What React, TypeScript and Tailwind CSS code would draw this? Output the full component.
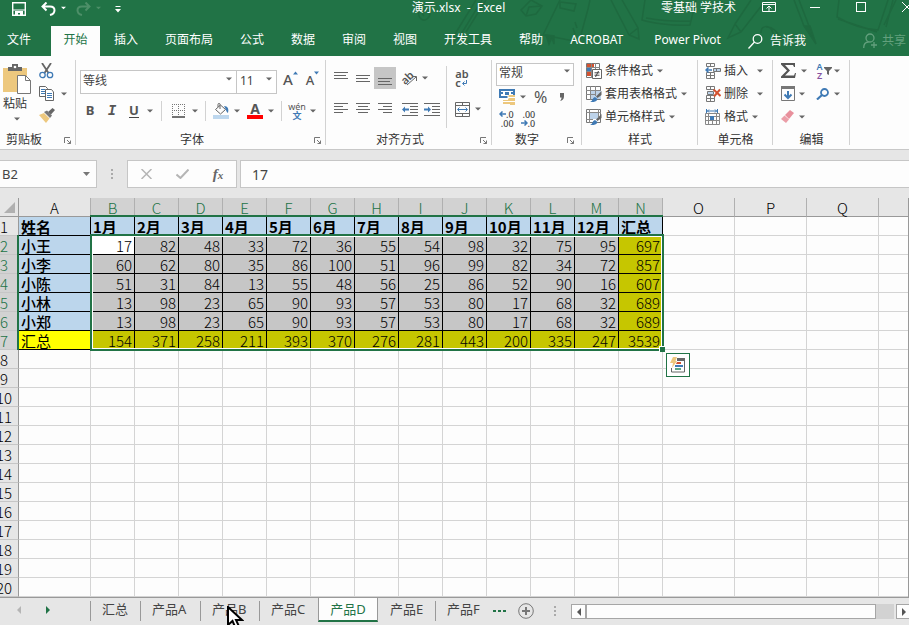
import { useState } from 'react';
import type { ReactNode } from 'react';
import clsx from 'clsx';

const BLUE = '#3f7ab5';
const DARK = '#666666';

const menuTabs = ['插入', '页面布局', '公式', '数据', '审阅', '视图', '开发工具', '帮助', 'ACROBAT', 'Power Pivot'];

const columns = ['A', 'B', 'C', 'D', 'E', 'F', 'G', 'H', 'I', 'J', 'K', 'L', 'M', 'N', 'O', 'P', 'Q', ''];

const months = ['1月', '2月', '3月', '4月', '5月', '6月', '7月', '8月', '9月', '10月', '11月', '12月'];

const rows: (string | number)[][] = [
  ['姓名', ...months, '汇总'],
  ['小王', 17, 82, 48, 33, 72, 36, 55, 54, 98, 32, 75, 95, 697],
  ['小李', 60, 62, 80, 35, 86, 100, 51, 96, 99, 82, 34, 72, 857],
  ['小陈', 51, 31, 84, 13, 55, 48, 56, 25, 86, 52, 90, 16, 607],
  ['小林', 13, 98, 23, 65, 90, 93, 57, 53, 80, 17, 68, 32, 689],
  ['小郑', 13, 98, 23, 65, 90, 93, 57, 53, 80, 17, 68, 32, 689],
  ['汇总', 154, 371, 258, 211, 393, 370, 276, 281, 443, 200, 335, 247, 3539],
];

const ROW_COUNT = 20;

const sheetTabs = ['汇总', '产品A', '产品B', '产品C', '产品D', '产品E', '产品F'];

const Caret = ({ className }: { className?: string }) => (
  <svg width="6" height="4" viewBox="0 0 6 4" className={clsx('shrink-0', className)} fill="#666">
    <path d="M0 .5h6L3 3.5z" />
  </svg>
);

const CaretButton = ({ label }: { label: string }) => (
  <button aria-label={label} className="flex h-5 w-[10px] shrink-0 items-center justify-center">
    <Caret />
  </button>
);

const Tool = ({ label, active, children }: { label: string; active?: boolean; children: ReactNode }) => (
  <button
    aria-label={label}
    className={clsx('flex h-[22px] w-[22px] shrink-0 items-center justify-center', active && 'bg-[#c6c6c6]')}
  >
    {children}
  </button>
);

const Launcher = () => (
  <button aria-label="更多设置" className="absolute right-[5px] bottom-[5px]">
    <svg width="7" height="7" viewBox="0 0 7 7" stroke="#777" fill="none">
      <path d="M.5 6V.5H6M3 3l3.5 3.5M6.5 3.5v3h-3" />
    </svg>
  </button>
);

const Group = ({ title, className, launcher, children }: {
  title: string;
  className: string;
  launcher?: boolean;
  children: ReactNode;
}) => (
  <section className={clsx('relative flex h-full shrink-0 flex-col', className)}>
    <div className="flex-1">{children}</div>
    <div className="h-[19px] text-center text-xs leading-[19px] text-[#333]">{title}</div>
    {launcher && <Launcher />}
    <span className="absolute top-1 right-0 bottom-[4px] w-px bg-[#d2d2d2]" />
  </section>
);

const Lines = ({ widths, align = 'left' }: { widths: number[]; align?: 'left' | 'center' | 'right' }) => (
  <svg width="14" height="14" viewBox="0 0 14 14" fill="#666">
    {widths.map((w, i) =>
      w ? <rect key={i} x={align === 'left' ? 0 : align === 'center' ? (14 - w) / 2 : 14 - w} y={1 + i} width={w} height="1" /> : null
    )}
  </svg>
);

const Indent = ({ flip }: { flip?: boolean }) => (
  <svg width="16" height="14" viewBox="0 0 16 14">
    <path d="M0 1.5h16M8 4.5h8M8 7.5h8M8 10.5h8M0 13.5h16" stroke={DARK} />
    <path d={flip ? 'M0 6.500h4v-2L7 7.500 4 10.500v-2H0z' : 'M7 6.500H3v-2L0 7.500 3 10.500v-2h4z'} fill={BLUE} />
  </svg>
);

const PasteIcon = () => (
  <svg width="28" height="31" viewBox="0 0 28 31">
    <path d="M0 4h24v24H0z" fill="#edc87e" />
    <path d="M5 7V3h4V0h6v3h4v4z" fill="#666" />
    <circle cx="12" cy="3" r="1.3" fill="#fff" />
    <path d="M14.5 11.5h8l5 5v13h-13z" fill="#fff" stroke="#777" />
    <path d="M22.5 11.5v5h5" fill="none" stroke="#777" />
  </svg>
);

const CutIcon = () => (
  <svg width="15" height="16" viewBox="0 0 15 16" fill="none">
    <path d="M3 0l6.500 10M12 0L5.500 10" stroke="#666" strokeWidth="1.800" />
    <circle cx="3.500" cy="12" r="2.700" stroke={BLUE} strokeWidth="1.300" />
    <circle cx="11" cy="12" r="2.700" stroke={BLUE} strokeWidth="1.300" />
  </svg>
);

const CopyIcon = () => (
  <svg width="16" height="15" viewBox="0 0 16 15" fill="#fff" stroke="#666">
    <path d="M.5.500h6l2 2v8h-8z" />
    <path d="M2 3.500h4M2 5.500h4M2 7.500h4" stroke={BLUE} />
    <path d="M6.500 3.500h6l2 2.500v8.500h-8z" />
    <path d="M8 7.500h5M8 9.500h5M8 11.500h5" stroke={BLUE} />
  </svg>
);

const BrushIcon = () => (
  <svg width="16" height="15" viewBox="0 0 16 15">
    <path d="M9 4l4.500-4L16 2l-4 4.500z" fill="#666" />
    <path d="M5 4l3-1.500 5 5L11 10z" fill="#777" />
    <path d="M0 7l5-2 5.500 5.500L7 15z" fill="#edc87e" />
  </svg>
);

const GridIcon = ({ kind }: { kind: 'rule' | 'table' | 'cell' }) => (
  <svg width="16" height="16" viewBox="0 0 16 16" fill="none">
    {kind === 'rule' ? (
      <>
        <path d="M.5.500h13v14H.500z" fill="#fff" stroke="#777" />
        <path d="M1 1h7v3H1zM1 9h4v4H1z" fill="#d35230" />
        <path d="M1 5h4v3H1z" fill={BLUE} />
        <path d="M5.500 0v15M9.500 0v6M0 4.500h14M0 8.500h6" stroke="#888" />
        <path d="M6.500 6.500h9v9h-9z" fill="#fff" stroke="#666" />
        <path d="M8.500 9.800h5M8.500 12.200h5M12.500 8l-3 6" stroke="#444" />
      </>
    ) : (
      <>
        <path d="M.5.500h14v13H.500z" fill="#fff" stroke="#777" />
        <path d={kind === 'table' ? 'M5 4h10v9H5z' : 'M4 3h8v7H4z'} fill="#bdd3ea" />
        <path d={kind === 'table' ? 'M0 4.500h15M0 8.500h10M4.500 0v14M9.500 0v10' : 'M0 3.500h15M0 10.500h7M3.500 0v14M12.500 0v8'} stroke="#888" />
        <path d="M15.500 5v4l-4 3-1.500-1.500z" fill="#666" />
        <path d="M4 16c3-1 2-4 5-5l2.500 2C11 15.500 8 16.500 4 16z" fill={BLUE} />
      </>
    )}
  </svg>
);

const CellsIcon = ({ kind }: { kind: 'insert' | 'delete' | 'format' }) => (
  <svg width="16" height="16" viewBox="0 0 16 16" fill="none">
    {kind === 'format' ? (
      <>
        <path d="M1.500 0v4M12.500 0v4M2 2h10M4 .5L2.500 2 4 3.500M10 .5L11.500 2 10 3.500" stroke={BLUE} />
        <path d="M.5 4.500h14v11H.500zM0 7.500h15M0 11.500h15M3.500 4v12M11.500 4v12M7.500 11v5" stroke="#888" />
        <path d="M5 7h4v4H5z" fill={BLUE} />
      </>
    ) : (
      <>
        <path d="M1.500.500h8v3h-8zM5.500 0v4M1.500 12.500h8v3h-8zM5.500 9v7M1.500 9.500h8v3h-8z" stroke="#777" />
        {kind === 'insert' ? (
          <>
            <path d="M8.500 5.500h7v3h-7zM11.500 5v4" fill="#bdd3ea" stroke="#777" />
            <path d="M7 7H1M3.500 4.500L1 7l2.500 2.500" stroke={BLUE} strokeWidth="1.500" />
          </>
        ) : (
          <>
            <path d="M2.500 5.500h6v3h-6z" fill="#bdd3ea" stroke="#777" />
            <path d="M8.500 3.500l7 6.500M15 3.500l-6 7" stroke="#d35230" strokeWidth="2" />
          </>
        )}
      </>
    )}
  </svg>
);

const MenuRow = ({ icon, label, wide }: { icon: ReactNode; label: string; wide?: boolean }) => (
  <button className="flex h-[23px] items-center text-xs whitespace-nowrap text-[#333]">
    {icon}
    <span className="ml-[3px]">{label}</span>
    <Caret className={wide ? 'ml-[9px]' : 'ml-1'} />
  </button>
);

// Line drawings of stationery that sit faintly behind the title bar
const HeaderDoodles = () => (
  <svg className="pointer-events-none absolute top-0 right-0" width="509" height="56" viewBox="400 0 509 56" fill="none" stroke="#1e693f" strokeWidth="1.500">
    <path d="M419 10c-2 8 4 12 8 9s4-9 0-10-6 5-3 7" />
    <path d="M455 34L476 0M460 36L482 0M466 32L486 0M455 34l-4 10 9-8" />
    <path d="M521 10l10-10 11 6-6 8-10 2zM526 16l3-9 13-1" />
    <path d="M543 35L560 0M543 35l36 7L588 9l2-9M560 2l16 2-2 7-14-3z" />
    <path d="M546 35l3 9 3-6 2 6v-8z" fill="#1e693f" />
    <path d="M575 22l2 6M573 28l2 6" />
    <path d="M611 0l18 35 10 4-1-11L622 0M629 35l9-7" />
    <path d="M645 0l-3 20c10 3 30 6 48 5l6-25M646 18c18 3 30 4 45 3" />
    <path d="M735 24L751 0M741 32L766 0M735 24l-7 14 13-6zM735 24l6 8" />
    <path d="M761 33c0-8 9-9 12 0l4 13M766 27c8-1 12 7 16 13" />
    <path d="M794 0l10 26M799 0l10 26M804 26l12 18-6-18z" fill="#1e693f" />
    <path d="M839 0l-2 17c12 7 25 12 41 13l10-30M838 19l39 13M884 25l12-25M893 0l-7 27" />
  </svg>
);

const TitleBar = () => (
  <div className="relative grid h-[26px] grid-cols-[1fr_auto_1fr] text-xs text-white">
    <div className="flex items-start pl-[12px]">
      <button aria-label="保存" className="pt-[2px]">
        <svg width="14" height="14" viewBox="0 0 14 14" fill="none" stroke="#fff">
          <path d="M.7.700h12.600v12.600H.700z" strokeWidth="1.400" />
          <path d="M1 7.500h12v1H1zM3 9h8v4.500H8V11H6v2.500H3z" fill="#fff" stroke="none" />
        </svg>
      </button>
      <button aria-label="撤消" className="ml-[15px] pt-[2px]">
        <svg width="15" height="14" viewBox="0 0 15 14" fill="none" stroke="#fff" strokeWidth="2">
          <path d="M5.500.500L1.500 4.500l4 4M2 4.500h7c6 0 6 7 0 8.500" />
        </svg>
      </button>
      <svg className="mt-[6px] ml-[5px]" width="5" height="4" viewBox="0 0 6 4" fill="#fff"><path d="M0 .5h6L3 3.500z" /></svg>
      <button aria-label="恢复" className="ml-[10px] pt-[2px]">
        <svg width="15" height="14" viewBox="0 0 15 14" fill="none" stroke="#4d8f68" strokeWidth="2">
          <path d="M9.500.500l4 4-4 4M13 4.500H6c-6 0-6 7 0 8.500" />
        </svg>
      </button>
      <svg className="mt-[6px] ml-[5px]" width="5" height="4" viewBox="0 0 6 4" fill="#4d8f68"><path d="M0 .5h6L3 3.500z" /></svg>
      <button aria-label="自定义快速访问工具栏" className="ml-[14px] pt-[6px]">
        <svg width="6" height="7" viewBox="0 0 6 7" fill="#fff"><path d="M.5 0h5v1h-5zM0 3h6L3 6.500z" /></svg>
      </button>
    </div>
    <div className="pl-[8px] leading-[16px] whitespace-pre">演示.xlsx  -  Excel</div>
    <div className="-mr-[21px] flex items-start justify-end leading-[15px]">
      <span className="mr-[10px] whitespace-nowrap">零基础 学技术</span>
      <button aria-label="功能区显示选项" className="flex h-[14px] w-[46px] items-center justify-center">
        <svg width="14" height="12" viewBox="0 0 14 12" fill="none" stroke="#fff"><path d="M.5 1.500h13v9H.500zM1 3.500h12M7 10V5M4.500 7.500L7 5l2.500 2.500" /></svg>
      </button>
      <button aria-label="最小化" className="flex h-[14px] w-[46px] items-center justify-center"><span className="h-px w-[10px] bg-white" /></button>
      <button aria-label="最大化" className="flex h-[14px] w-[46px] items-center justify-center"><span className="h-[10px] w-[10px] border border-white" /></button>
      <button aria-label="关闭" className="flex h-[14px] w-[46px] items-center justify-center">
        <svg width="10" height="10" viewBox="0 0 10 10" stroke="#fff"><path d="M0 0l10 10M10 0L0 10" /></svg>
      </button>
    </div>
  </div>
);

const MenuBar = () => (
  <nav className="relative flex h-[30px] items-stretch gap-px overflow-hidden text-xs leading-[28px] whitespace-nowrap text-white">
    <button className="w-[50px] shrink-0 pb-[2px] pl-[7px] text-left">文件</button>
    <button className="w-[49px] shrink-0 bg-[#fdfdfd] pb-[2px] text-[#217346]">开始</button>
    {menuTabs.map(tab => (
      <button key={tab} className={clsx('shrink-0 pb-[2px] pl-[13px]', tab === 'ACROBAT' ? 'pr-[17px]' : 'pr-[13px]')}>{tab}</button>
    ))}
    <button className="flex shrink-0 items-center pl-[13px]">
      <svg width="15" height="15" viewBox="0 0 15 15" fill="none" stroke="#fff" strokeWidth="1.300">
        <circle cx="9.500" cy="5" r="4.300" />
        <path d="M6.500 8L.5 14.500" />
      </svg>
      <span className="ml-[7px]">告诉我</span>
    </button>
    <button className="mr-[3px] ml-auto flex shrink-0 items-center text-[#63a07d]">
      <svg width="15" height="16" viewBox="0 0 15 16" fill="none" stroke="#63a07d" strokeWidth="1.300">
        <circle cx="7" cy="5" r="4" />
        <path d="M.7 15c0-4 2-6 5-6M11 9v6M8 12h6" />
      </svg>
      <span className="ml-[4px]">共享</span>
    </button>
  </nav>
);

const Ribbon = () => (
  <div className="flex h-[94px] shrink-0 overflow-hidden border-b border-[#c8c8c8] bg-[#fdfdfd]">
    <Group title="剪贴板" className="w-[76px] [&>div:nth-child(2)]:pr-[28px]" launcher>
      <div className="flex pt-[7px] pl-[3px]">
        <button className="flex w-[28px] shrink-0 flex-col items-center pt-[1px] text-xs leading-[18px] whitespace-nowrap text-[#333]">
          <PasteIcon />
          <span className="-ml-[4px]">粘贴</span>
          <Caret className="mt-[4px]" />
        </button>
        <div className="ml-[8px] flex flex-col gap-[7px]">
          <button aria-label="剪切" className="h-[16px]"><CutIcon /></button>
          <div className="flex items-center">
            <button aria-label="复制"><CopyIcon /></button>
            <Caret className="ml-[6px]" />
          </div>
          <button aria-label="格式刷"><BrushIcon /></button>
        </div>
      </div>
    </Group>

    <Group title="字体" className="w-[250px] [&>div:nth-child(2)]:pr-[18px]" launcher>
      <div className="flex pt-[11px] pl-[4px]">
        <div className="relative w-[157px]">
          <select aria-label="字体名称" className="h-[24px] w-full appearance-none border border-[#c6c6c6] bg-white pb-[2px] pl-[2px] text-xs text-[#444]">
            <option>等线</option>
          </select>
          <Caret className="pointer-events-none absolute top-[10px] right-[5px]" />
        </div>
        <div className="relative -ml-px w-[41px]">
          <select aria-label="字号" className="h-[24px] w-full appearance-none border border-[#c6c6c6] bg-white pb-[2px] pl-[3px] text-xs text-[#444]">
            <option>11</option>
          </select>
          <Caret className="pointer-events-none absolute top-[10px] right-[5px]" />
        </div>
        <button aria-label="增大字号" className="ml-[6px] flex items-start text-[15px] leading-[24px] font-medium text-[#555]">
          A<svg className="mt-[4px]" width="5" height="4" viewBox="0 0 5 4" fill={BLUE}><path d="M0 3.500h5L2.500.500z" /></svg>
        </button>
        <button aria-label="减小字号" className="ml-[8px] flex items-start text-[13px] leading-[26px] font-medium text-[#555]">
          A<svg className="mt-[4px]" width="5" height="4" viewBox="0 0 5 4" fill={BLUE}><path d="M0 .5h5L2.500 3.500z" /></svg>
        </button>
      </div>
      <div className="flex items-center pt-[6px] pl-[3px] text-[13px] text-[#555]">
        <Tool label="加粗"><b>B</b></Tool>
        <Tool label="倾斜"><i className="font-['Liberation_Mono',monospace] text-[14px] font-bold">I</i></Tool>
        <Tool label="下划线"><b className="border-b border-[#444] leading-[13px]">U</b></Tool>
        <CaretButton label="下划线样式" />
        <span className="mx-[6px] h-[20px] w-px bg-[#d2d2d2]" />
        <Tool label="边框">
          <svg width="14" height="14" viewBox="0 0 14 14" stroke="#777" fill="none">
            <path d="M0 .5h13M0 6.500h13M.5 0v12M6.500 0v12M12.500 0v12" strokeDasharray="1 1" />
            <path d="M0 13h13" stroke="#444" strokeWidth="1.500" />
          </svg>
        </Tool>
        <CaretButton label="边框样式" />
        <span className="mr-[4px] ml-[5px] h-[20px] w-px bg-[#d2d2d2]" />
        <Tool label="填充颜色">
          <svg width="17" height="16" viewBox="0 0 17 16" fill="none">
            <path d="M2.500 6.500l5-4.500 5 4.500-5 4.500zM7 6V1.500c0-1.500-2-1.500-2 0V4" stroke="#666" />
            <path d="M11 3c4 0 5 3 4 7-2-1-2-4-4-7z" fill={BLUE} />
            <path d="M0 12h16v4H0z" fill="#bdd7ee" />
          </svg>
        </Tool>
        <CaretButton label="填充颜色选项" />
        <span className="w-[2px]" />
        <Tool label="字体颜色">
          <span className="flex w-[16px] flex-col items-center text-[14px] leading-[12px] font-bold">A<span className="h-[4px] w-full bg-[#f00]" /></span>
        </Tool>
        <CaretButton label="字体颜色选项" />
        <span className="mr-[4px] ml-[5px] h-[20px] w-px bg-[#d2d2d2]" />
        <Tool label="拼音指南">
          <span className="flex flex-col items-center text-[9px] leading-[9px]">wén<span className="font-bold text-[#3f7ab5]">文</span></span>
        </Tool>
        <CaretButton label="拼音选项" />
      </div>
    </Group>

    <Group title="对齐方式" className="w-[166px] [&>div:nth-child(2)]:pr-[18px]" launcher>
      <div className="flex pt-[10px] pl-[4px]">
        <div className="w-[117px] border-r border-[#d2d2d2]">
          <div className="flex h-[24px] items-center">
            <Tool label="顶端对齐"><Lines widths={[14, 0, 0, 12, 0, 0, 14]} /></Tool>
            <Tool label="垂直居中"><Lines widths={[0, 0, 0, 14, 0, 0, 12, 0, 0, 14]} /></Tool>
            <Tool label="底端对齐" active><Lines widths={[0, 0, 0, 0, 0, 0, 14, 0, 0, 12, 0, 0, 14]} /></Tool>
            <span className="w-[2px]" />
            <Tool label="方向">
              <svg width="18" height="16" viewBox="0 0 18 16" fill="none">
                <text x="1" y="13" fontSize="11" fontWeight="600" fill="#555" transform="rotate(-45 6 9)">ab</text>
                <path d="M7 15l9-8M12 6.500h4.500V11" stroke="#666" />
              </svg>
            </Tool>
            <CaretButton label="方向选项" />
          </div>
          <div className="flex h-[38px] items-center">
            <Tool label="左对齐"><Lines widths={[14, 0, 0, 9, 0, 0, 14, 0, 0, 9]} /></Tool>
            <Tool label="居中"><Lines align="center" widths={[14, 0, 0, 10, 0, 0, 14, 0, 0, 10]} /></Tool>
            <Tool label="右对齐"><Lines align="right" widths={[14, 0, 0, 9, 0, 0, 14, 0, 0, 9]} /></Tool>
            <span className="w-[3px]" />
            <Tool label="减少缩进量"><Indent /></Tool>
            <Tool label="增加缩进量"><Indent flip /></Tool>
          </div>
        </div>
        <div className="pl-[4px]">
          <div className="flex h-[24px] items-center">
            <Tool label="自动换行">
              <span className="flex flex-col text-[11px] leading-[9px] font-semibold text-[#555]">
                ab
                <span className="flex items-center gap-[1px]">c<svg width="5" height="6" viewBox="0 0 5 6" fill="none" stroke={BLUE}><path d="M4.500 0v3.500H1M2.500 1.500l-2 2 2 2" /></svg></span>
              </span>
            </Tool>
          </div>
          <div className="flex h-[38px] items-center">
            <Tool label="合并后居中">
              <svg width="15" height="15" viewBox="0 0 15 15" fill="none" stroke="#666">
                <path d="M.5.500h14v14H.500zM0 3.500h15M0 11.500h15M7.500 0v4M7.500 11v4" />
                <path d="M3 7.500h9M4.500 5.500l-2 2 2 2M10.500 5.500l2 2-2 2" stroke={BLUE} />
              </svg>
            </Tool>
            <CaretButton label="合并选项" />
          </div>
        </div>
      </div>
    </Group>

    <Group title="数字" className="w-[90px] [&>button]:right-[8px] [&>div:nth-child(2)]:pr-[20px]" launcher>
      <div className="pt-[3px] pl-[4px]">
        <div className="relative w-[78px]">
          <select aria-label="数字格式" className="h-[23px] w-full appearance-none border border-[#c6c6c6] bg-white pb-[2px] pl-[2px] text-xs text-[#444]">
            <option>常规</option>
          </select>
          <Caret className="pointer-events-none absolute top-[10px] right-[4px]" />
        </div>
        <div className="flex h-[22px] items-center text-[#555]">
          <button aria-label="会计数字格式" className="ml-[3px]">
            <svg width="17" height="16" viewBox="0 0 17 16">
              <path d="M1 1h14v7H1z" fill="#fff" stroke={BLUE} strokeWidth="2" />
              <path d="M6 3h4v3H6zM2 3h2v2H2zM12 3h2v2h-2z" fill={BLUE} />
              <path d="M9 6h7v10h-5v-1H4v-4h5z" fill="#edc87e" />
              <path d="M9 8.500h7M4 12.500h12M9 6v4" stroke="#fff" />
            </svg>
          </button>
          <span className="ml-[2px] flex"><CaretButton label="货币选项" /></span>
          <button aria-label="百分比样式" className="ml-[6px] text-base">%</button>
          <button aria-label="千位分隔样式" className="ml-[12px]">
            <svg width="6" height="8" viewBox="0 0 6 8"><path d="M1 0h4v3.500C5 6 3.500 7.500 1 8c1-1.200 1.500-2 1.500-3.500H1z" fill="#666" /></svg>
          </button>
        </div>
        <div className="flex gap-[7px] pt-[2px] pl-[3px] text-[9px] leading-[9px] font-medium text-[#444]">
          <button className="flex flex-col items-end" aria-label="增加小数位数">
            <span className="flex items-center"><svg width="7" height="6" viewBox="0 0 7 6" fill="none" stroke={BLUE}><path d="M7 3H1M3.500.500L1 3l2.500 2.500" strokeWidth="1.500" /></svg>.0</span>
            <span>.00</span>
          </button>
          <button className="flex flex-col items-end" aria-label="减少小数位数">
            <span>.00</span>
            <span className="flex items-center"><svg width="7" height="6" viewBox="0 0 7 6" fill="none" stroke={BLUE}><path d="M0 3h6M3.500.500L6 3 3.500 5.500" strokeWidth="1.500" /></svg>.0</span>
          </button>
        </div>
      </div>
    </Group>

    <Group title="样式" className="w-[116px]">
      <div className="pt-[3px] pl-[4px]">
        <MenuRow icon={<GridIcon kind="rule" />} label="条件格式" />
        <MenuRow icon={<GridIcon kind="table" />} label="套用表格格式" />
        <MenuRow icon={<GridIcon kind="cell" />} label="单元格样式" />
      </div>
    </Group>

    <Group title="单元格" className="w-[75px]">
      <div className="pt-[3px] pl-[7px]">
        <MenuRow icon={<CellsIcon kind="insert" />} label="插入" wide />
        <MenuRow icon={<CellsIcon kind="delete" />} label="删除" wide />
        <MenuRow icon={<CellsIcon kind="format" />} label="格式" />
      </div>
    </Group>

    <Group title="编辑" className="w-[77px]">
      <div className="grid grid-cols-[35px_1fr] pt-[3px] pl-[8px]">
        <button aria-label="自动求和" className="flex h-[23px] items-center gap-[5px]">
          <svg width="15" height="15" viewBox="0 0 15 15" fill="#555"><path d="M0 0h14v4h-1l-1-2H4l5 5.500L4 12.500h9l1-2.500h1l-1 5H0v-1.500l6-6L0 1.500z" /></svg>
          <Caret />
        </button>
        <button aria-label="排序和筛选" className="flex h-[23px] items-center">
          <span className="flex w-[7px] flex-col text-[9px] leading-[9px] font-semibold text-[#3f7ab5]">A<span className="text-[#8652a0]">Z</span></span>
          <svg className="ml-px" width="8" height="8" viewBox="0 0 8 8" fill="#666"><path d="M0 0h8v1L5 4v4L3 7V4L0 1z" /></svg>
          <Caret className="ml-[2px]" />
        </button>
        <button aria-label="填充" className="flex h-[23px] items-center gap-[4px]">
          <svg width="14" height="15" viewBox="0 0 14 15" fill="none"><path d="M.5.500h13v14H.500z" stroke="#777" /><path d="M0 0h14v3H0z" fill="#777" /><path d="M7 5v7M3.500 8.500L7 12l3.500-3.500" stroke={BLUE} strokeWidth="2" /></svg>
          <Caret />
        </button>
        <button aria-label="查找和选择" className="flex h-[23px] items-center gap-[5px]">
          <svg width="13" height="12" viewBox="0 0 13 12" fill="none" stroke={BLUE}><circle cx="8.500" cy="4.500" r="3.500" strokeWidth="1.800" /><path d="M6 7l-5 4.500" strokeWidth="2.200" /></svg>
          <Caret />
        </button>
        <button aria-label="清除" className="flex h-[23px] items-center gap-[5px]">
          <svg width="13" height="13" viewBox="0 0 13 13"><path d="M4 5l5-5 4 3-5 6z" fill="#e8909c" /><path d="M3.500 5.500L8 9.500 5 13 0 9z" fill="#eb9ea8" /></svg>
          <Caret />
        </button>
      </div>
    </Group>
  </div>
);

const FormulaBar = () => {
  const [value, setValue] = useState('17');

  return (
    <div className="flex h-[48px] shrink-0 items-start pt-[10px] text-[#444]">
      <div className="relative w-[97px] shrink-0">
        <input aria-label="名称框" defaultValue="B2" className="h-[28px] w-full border border-l-0 border-[#c6c6c6] bg-[#fdfdfd] pl-[2px] text-[13px]" />
        <svg className="absolute top-[12px] right-[7px]" width="7" height="4" viewBox="0 0 7 4" fill="#777"><path d="M0 0h7L3.500 4z" /></svg>
      </div>
      <svg className="mt-[9px] ml-[14px] shrink-0" width="2" height="11" viewBox="0 0 2 11" fill="#aaa"><path d="M0 0h2v2H0zM0 4h2v2H0zM0 8h2v2H0z" /></svg>
      <div className="ml-[14px] flex h-[28px] w-[110px] shrink-0 items-center border border-[#c6c6c6] bg-[#fdfdfd]">
        <button aria-label="取消" className="flex w-[36px] justify-center">
          <svg width="11" height="10" viewBox="0 0 11 10" stroke="#b5b5b5" strokeWidth="1.500"><path d="M.5 0l10 10M10.500 0l-10 10" /></svg>
        </button>
        <button aria-label="输入" className="flex w-[36px] justify-center">
          <svg width="13" height="10" viewBox="0 0 13 10" fill="none" stroke="#b5b5b5" strokeWidth="2"><path d="M.5 5.500l4 3.500L12.500.500" /></svg>
        </button>
        <button aria-label="插入函数" className="flex w-[36px] items-baseline justify-center font-['Liberation_Serif',serif] text-[15px] font-bold text-[#666] italic">
          f<span className="text-[11px]">x</span>
        </button>
      </div>
      <input
        aria-label="编辑栏"
        value={value}
        onChange={e => setValue(e.target.value)}
        className="ml-[3px] h-[28px] min-w-0 flex-1 border border-r-0 border-[#c6c6c6] bg-[#fdfdfd] pl-[11px] text-[14px]"
      />
    </div>
  );
};

const cellStyle = (row: number, col: number) => {
  // data block is A1:N7
  if (row > 6 || col > 13) return 'border-[#d4d4d4] bg-[#fdfdfd]';
  if (row === 0) return 'border-black bg-[#bcd6ec] font-bold';
  if (col === 0) return row === 6 ? 'border-black bg-[#ffff00]' : 'border-black bg-[#bcd6ec] font-medium';
  if (row === 6 || col === 13) return 'border-black bg-[#c6c600] text-right font-light';
  if (row === 1 && col === 1) return 'border-black bg-white text-right font-light';
  return 'border-black bg-[#c6c6c6] text-right font-light';
};

const Sheet = () => (
  <div className="relative min-h-0 flex-1 overflow-hidden border-r border-b border-[#999]">
    <table className="w-full table-fixed border-separate border-spacing-0 font-['Noto_Sans_CJK_SC',sans-serif] text-[15px] leading-[16px] whitespace-nowrap text-black">
      <colgroup>
        <col className="w-[19px]" />
        {columns.map((c, i) => (
          <col key={i} className={i === 17 ? '' : i === 0 || i > 13 ? 'w-[72px]' : 'w-[44px]'} />
        ))}
      </colgroup>
      <thead>
        <tr>
          <th className="h-[19px] border-r border-b border-[#999] p-0">
            <svg className="ml-[4px]" width="11" height="11" viewBox="0 0 11 11" fill="#b0b0b0"><path d="M11 0v11H0z" /></svg>
          </th>
          {columns.map((c, i) => (
            <th
              key={i}
              className={clsx(
                'h-[19px] border-r border-b p-0 pt-[2px] text-center font-light',
                i > 0 && i < 14 ? 'border-[#b0b0b0] bg-[#d2d2d2] text-[#217346]' : 'border-r-[#b0b0b0] border-b-[#999]',
                i === 17 && 'border-r-0'
              )}
            >
              {c}
            </th>
          ))}
        </tr>
      </thead>
      <tbody>
        {Array.from({ length: ROW_COUNT }, (_, r) => (
          <tr key={r}>
            <th
              className={clsx(
                'h-[19px] border-r border-b border-r-[#999] border-b-[#c6c6c6] p-0 pt-[2px] font-light',
                r > 0 && r < 7 && 'bg-[#d2d2d2] text-[#217346]'
              )}
            >
              <span className="flex w-[8px] justify-center">{r + 1}</span>
            </th>
            {columns.map((c, i) => (
              <td key={i} className={clsx('h-[19px] border-r border-b px-[2px] pt-[2px] pb-0', cellStyle(r, i), i === 17 && 'border-r-0')}>
                {rows[r]?.[i] ?? ''}
              </td>
            ))}
          </tr>
        ))}
      </tbody>
    </table>

    {/* selection B2:N7 */}
    <div className="pointer-events-none absolute top-[36px] left-[90px] h-[117px] w-[574px] border-2 border-[#217346]">
      <div className="h-full w-full border border-white" />
      <span className="absolute -right-[3px] -bottom-[3px] h-[6px] w-[6px] border-t border-l border-white bg-[#217346]" />
    </div>
    <span className="absolute top-[17px] left-[90px] h-[2px] w-[573px] bg-[#217346]" />
    <span className="absolute top-[37px] left-[17px] h-[115px] w-[2px] bg-[#217346]" />

    <button aria-label="快速分析" className="absolute top-[155px] left-[666px] flex h-[24px] w-[24px] items-center justify-center border border-[#217346] bg-white">
      <svg width="16" height="16" viewBox="0 0 16 16">
        <path d="M1.500 11v4h13V1" fill="none" stroke="#666" />
        <path d="M7 1h8v3H7z" fill="#666" />
        <path d="M3 0h4L5.500 4H7l-5 7 1-5H0z" fill="#edc87e" />
        <path d="M7 5h4v2H6z" fill="#d35230" />
        <path d="M5 8h8v2H5z" fill={BLUE} />
        <path d="M5 11h6v2H5z" fill="#5fa585" />
      </svg>
    </button>
  </div>
);

const tabWidths = ['w-[50px]', 'w-[60px]', 'w-[59px]', 'w-[59px]', 'w-[60px]', 'w-[57px]', 'w-[56px]'];

const SheetTabs = () => {
  const [active, setActive] = useState('产品D');

  return (
    <div className="relative flex h-[27px] shrink-0 items-start overflow-hidden text-[13px] leading-[22px] text-[#444]">
      <button aria-label="上一个工作表" className="mt-[8px] ml-[17px]">
        <svg width="4" height="8" viewBox="0 0 4 8" fill="#b5b5b5"><path d="M4 0v8L0 4z" /></svg>
      </button>
      <button aria-label="下一个工作表" className="mt-[8px] mr-[40px] ml-[25px]">
        <svg width="4" height="8" viewBox="0 0 4 8" fill="#217346"><path d="M0 0v8l4-4z" /></svg>
      </button>
      {sheetTabs.map((tab, i) => (
        <button
          key={tab}
          onClick={() => setActive(tab)}
          className={clsx(
            'flex shrink-0 whitespace-nowrap',
            tabWidths[i],
            tab === active && '-mt-px h-[25px] justify-center border-x border-b-2 border-x-[#999] border-b-[#217346] bg-[#fdfdfd] pt-px text-[#217346]'
          )}
        >
          {tab !== active && <span className={clsx('mt-[3px] h-[20px] w-px', sheetTabs[i - 1] !== active && 'bg-[#999]')} />}
          <span className={clsx(tab !== active && 'ml-[11px]')}>{tab}</span>
        </button>
      ))}
      <button aria-label="更多工作表" className="mt-[12px] ml-[2px] flex shrink-0 gap-[2px]">
        <span className="h-[2px] w-[3px] bg-[#217346]" />
        <span className="h-[2px] w-[3px] bg-[#217346]" />
        <span className="h-[2px] w-[3px] bg-[#217346]" />
      </button>
      <button aria-label="新工作表" className="mt-[5px] ml-[12px] shrink-0">
        <svg width="16" height="16" viewBox="0 0 16 16" fill="none" stroke="#777"><circle cx="8" cy="8" r="7.300" /><path d="M8 4v8M4 8h8" strokeWidth="2" /></svg>
      </button>
      <svg className="mt-[8px] ml-[20px] shrink-0" width="2" height="11" viewBox="0 0 2 11" fill="#aaa"><path d="M0 0h2v2H0zM0 4h2v2H0zM0 8h2v2H0z" /></svg>
      <div className="mt-[6px] ml-[15px] flex h-[15px] min-w-0 flex-1">
        <button aria-label="向左滚动" className="flex w-[15px] shrink-0 items-center justify-center border border-[#a6a6a6] bg-[#fdfdfd]">
          <svg width="4" height="8" viewBox="0 0 4 8" fill="#555"><path d="M4 0v8L0 4z" /></svg>
        </button>
        <div className="flex flex-1 bg-[#d2d2d2]">
          <div className="w-[94%] border border-[#a6a6a6] bg-[#fdfdfd]" />
        </div>
        <button aria-label="向右滚动" className="-mr-[2px] ml-[2px] flex w-[15px] shrink-0 items-center justify-center border border-[#a6a6a6] bg-[#fdfdfd]">
          <svg width="4" height="8" viewBox="0 0 4 8" fill="#555"><path d="M0 0v8l4-4z" /></svg>
        </button>
      </div>
    </div>
  );
};

const App = () => (
  <div className="relative flex h-screen flex-col overflow-hidden bg-[#e6e6e6] font-['Noto_Sans','Noto_Sans_CJK_SC',sans-serif]">
    <header className="relative shrink-0 overflow-hidden bg-[#217346]">
      <HeaderDoodles />
      <TitleBar />
      <MenuBar />
    </header>
    <Ribbon />
    <FormulaBar />
    <Sheet />
    <SheetTabs />

    {/* mouse pointer */}
    <svg className="pointer-events-none absolute top-[606px] left-[227px]" width="17" height="24" viewBox="0 0 17 24">
      <path d="M1 1v18l4.500-4 3.500 8 3.500-1.500-3.500-7.500h6z" fill="#fff" stroke="#000" strokeWidth="2" />
    </svg>
  </div>
);

export default App;
